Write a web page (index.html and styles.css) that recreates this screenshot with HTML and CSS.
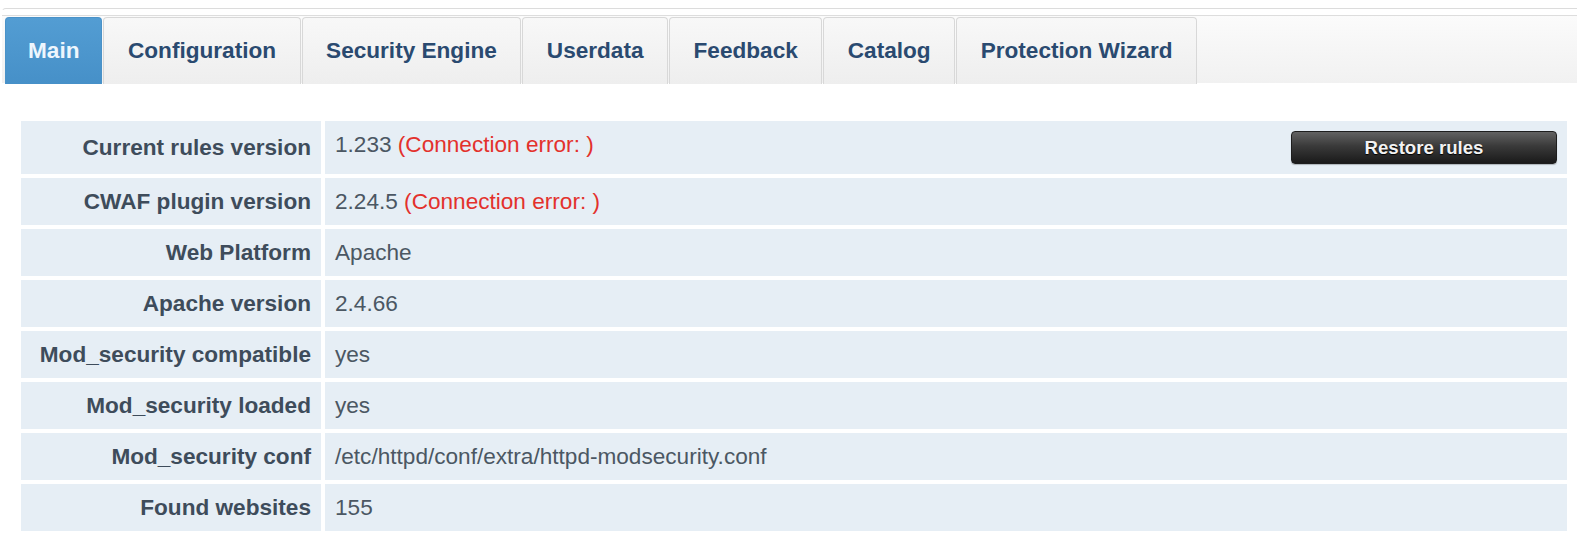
FILE: index.html
```html
<!DOCTYPE html>
<html>
<head>
<meta charset="utf-8">
<title>CWAF</title>
<link rel="stylesheet" href="styles.css">
</head>
<body>
<div class="panel">
  <ul class="tabs">
    <li class="tab active">Main</li>
    <li class="tab">Configuration</li>
    <li class="tab">Security Engine</li>
    <li class="tab">Userdata</li>
    <li class="tab">Feedback</li>
    <li class="tab">Catalog</li>
    <li class="tab">Protection Wizard</li>
  </ul>
  <div class="content">
    <table class="info">
      <tr class="first">
        <th>Current rules version</th>
        <td><button class="btn">Restore rules</button>1.233 <span class="err">(Connection error: )</span></td>
      </tr>
      <tr>
        <th>CWAF plugin version</th>
        <td>2.24.5 <span class="err">(Connection error: )</span></td>
      </tr>
      <tr>
        <th>Web Platform</th>
        <td>Apache</td>
      </tr>
      <tr>
        <th>Apache version</th>
        <td>2.4.66</td>
      </tr>
      <tr>
        <th>Mod_security compatible</th>
        <td>yes</td>
      </tr>
      <tr>
        <th>Mod_security loaded</th>
        <td>yes</td>
      </tr>
      <tr>
        <th>Mod_security conf</th>
        <td>/etc/httpd/conf/extra/httpd-modsecurity.conf</td>
      </tr>
      <tr>
        <th>Found websites</th>
        <td>155</td>
      </tr>
    </table>
  </div>
</div>
</body>
</html>
```
FILE: styles.css
```css
html, body {
  margin: 0;
  padding: 0;
  background: #ffffff;
  overflow: hidden;
}
body {
  font-family: "Liberation Sans", Arial, sans-serif;
}
.panel {
  margin: 8px -10px 0 1px;
  border-top: 1px solid #dcdcdc;
  border-left: 1px solid #ffffff;
  border-right: 1px solid #ffffff;
  border-radius: 5px 5px 0 0;
  padding-top: 6px;
}
.tabs {
  list-style: none;
  margin: 0;
  padding: 1px 0 0 3px;
  height: 68px;
  display: flex;
  gap: 1px;
  border-top: 1px solid #dddddd;
  background: linear-gradient(to bottom, #fbfbfb 0%, #f1f1f1 100%);
  box-sizing: border-box;
}
.tab {
  height: 67px;
  box-sizing: border-box;
  padding: 0 23.5px;
  display: flex;
  align-items: center;
  font-size: 22.6px;
  font-weight: bold;
  color: #2a4a70;
  background: linear-gradient(to bottom, #f8f8f8 0%, #eeeeee 100%);
  border: 1px solid #d8d8d8;
  border-bottom: none;
  border-radius: 4px 4px 0 0;
}
.tab.active {
  padding: 0 22px;
  color: #eef6fd;
  background: linear-gradient(to bottom, #539dd3 0%, #4690c8 100%);
  border-color: #4a92c8;
}
.content {
  padding: 34px 15px 20px 15px;
}
.info {
  width: 100%;
  border-collapse: separate;
  border-spacing: 4px;
  font-size: 22.6px;
}
.info th,
.info td {
  background: #e6eef5;
  padding: 10px;
  line-height: 27px;
}
.info th {
  width: 280px;
  text-align: right;
  font-weight: bold;
  color: #3e4c5b;
  vertical-align: middle;
  white-space: nowrap;
}
.info td {
  text-align: left;
  font-weight: normal;
  color: #4b5763;
  vertical-align: top;
}
.err {
  color: #e3312c;
}
.btn {
  float: right;
  width: 266px;
  height: 33px;
  margin: 0;
  padding: 0;
  border: 1px solid #1e1e1e;
  border-radius: 4px;
  background: linear-gradient(to bottom, #626262 0%, #3a3a3a 45%, #1a1a1a 100%);
  color: #f2f2f2;
  font-family: "Liberation Sans", Arial, sans-serif;
  font-weight: bold;
  font-size: 18.6px;
  text-shadow: 0 1px 1px #000;
  box-shadow: 0 1px 1px rgba(0,0,0,0.25);
}
```
